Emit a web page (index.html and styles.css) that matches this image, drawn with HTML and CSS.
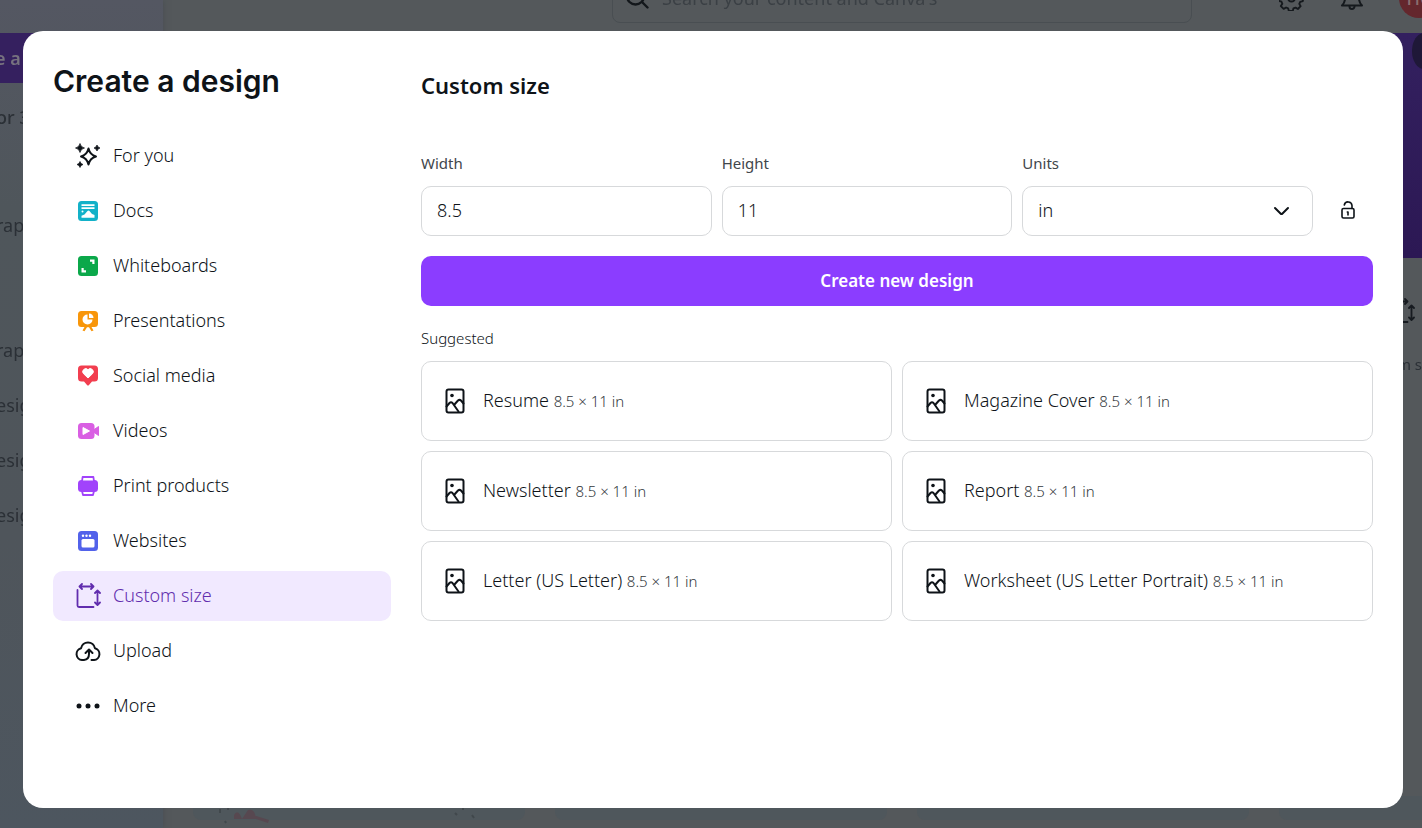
FILE: index.html
```html
<!DOCTYPE html>
<html lang="en">
<head>
<meta charset="utf-8">
<title>Create a design</title>
<link rel="stylesheet" href="styles.css">
</head>
<body>
<svg class="sprite" aria-hidden="true">
  <symbol id="page-image" viewBox="0 0 24 28"><g fill="none" stroke="currentColor" stroke-width="2" stroke-linejoin="round" stroke-linecap="round"><rect x="3.500" y="2.500" width="17" height="23" rx="2"/><path d="M3.500 19.500l3-3.500q1.500-1.500 3 0l6 8.500M11 18l4-4.500q1.500-1.300 3 0l2.500 3"/></g><circle cx="9" cy="8.500" r="1.800" fill="currentColor"/></symbol>
  <symbol id="resize" viewBox="0 0 26 26"><path d="M2.500 7v15.500q0 1.500 1.500 1.500H18.500M5 3.500h12.500M7 1L4.500 3.500 7 6M16 1l2.500 2.500L16 6M22.500 8v13M20 10l2.500-2.500L25 10M20 19.500l2.500 2.500 2.500-2.500" fill="none" stroke="currentColor" stroke-width="1.800" stroke-linecap="round" stroke-linejoin="round"/></symbol>
</svg>

<div class="page" aria-hidden="true">
  <div class="page-side">
    <div class="page-create">e a</div>
    <div class="page-team">or 3</div>
    <ul class="page-links">
      <li class="page-link page-link-spaced">rap</li>
      <li class="page-link">rap</li>
      <li class="page-link">esig</li>
      <li class="page-link">esig</li>
      <li class="page-link">esig</li>
    </ul>
  </div>
  <div class="page-main">
    <div class="page-top">
      <div class="page-search">
        <svg class="page-glass" viewBox="0 0 26 26"><path d="M17 17l5.500 5.500M19 11a8.500 8.500 0 1 1-17 0 8.500 8.500 0 0 1 17 0z" fill="none" stroke="currentColor" stroke-width="2.400" stroke-linecap="round"/></svg>
        <span>Search your content and Canva's</span>
      </div>
      <div class="page-tools">
        <svg class="page-tool" viewBox="0 0 26 26" fill="none" stroke="currentColor" stroke-width="2" stroke-linejoin="round"><path d="M10.800 2h4.400l.7 3 2.200 1 2.700-1.600 3 3-1.600 2.700.9 2.200 2.600.8v4.200l-2.900.8-1 2.200 1.500 2.500-3 3-2.500-1.500-2.300.9-.7 2.800h-4.200l-.8-2.900-2.200-.9-2.600 1.500-3-3 1.600-2.500-.9-2.200-2.700-.9v-4.100l2.900-.8.9-2.100L2.200 7.400l3-3L7.800 6 10 5z" transform="scale(.93)"/><circle cx="12.500" cy="13" r="3.500"/></svg>
        <svg class="page-tool" viewBox="0 0 26 26" fill="none" stroke="currentColor" stroke-width="2" stroke-linejoin="round" stroke-linecap="round"><path d="M3 20.500h20c-2-2-3-4-3-7V10a7 7 0 0 0-14 0v3.500c0 3-1 5-3 7z"/><path d="M10.500 21.500a2.500 2.500 0 0 0 5 0"/></svg>
        <div class="page-avatar">HC</div>
      </div>
    </div>
    <div class="page-hero"><svg class="page-orb" viewBox="0 0 10 36"><ellipse cx="12" cy="18" rx="12" ry="18" fill="#1f1838"/></svg></div>
    <div class="page-short">
      <svg class="page-resize"><use href="#resize"/></svg>
      <span>m s</span>
    </div>
    <div class="page-cards">
      <div class="page-card">
        <svg class="page-art" viewBox="0 0 300 24"><path d="M41 9q4-7 8 4l6-9q7-2 8 9H41zM60 9l16 5-1 3-12-4z" fill="#574850"/><path d="M27 3v4M35 1v3M262 7l2 2M279 9l2 3M270 2v2M32 15l1 2" stroke="#41484c" stroke-width="2"/></svg>
      </div>
      <div class="page-card"></div>
      <div class="page-card"></div>
      <div class="page-card"></div>
    </div>
  </div>
</div>

<div class="overlay">
  <div class="dialog" role="dialog" aria-modal="true" aria-labelledby="dialog-title">
    <div class="side">
      <h1 class="side-title" id="dialog-title">Create a design</h1>
      <nav class="nav">
        <button class="nav-item"><svg class="nav-icon" viewBox="0 0 26 26"><path d="M13.500 5.500Q15 12 21 13.500 15 15 13.500 21.500 12 15 6 13.500 12 12 13.500 5.500z" fill="none" stroke="currentColor" stroke-width="2" stroke-linejoin="round"/><path d="M5 .5Q5.800 4.200 9.500 5 5.800 5.800 5 9.500 4.200 5.800.5 5 4.200 4.200 5 .5zM22 2q.6 2.400 3 3-2.400.6-3 3-.6-2.400-3-3 2.400-.6 3-3zM5 18.500q.6 2.400 3 3-2.400.6-3 3-.6-2.400-3-3 2.400-.6 3-3z" fill="currentColor" stroke="currentColor" stroke-width=".7"/></svg><span class="nav-text">For you</span></button>
        <button class="nav-item"><svg class="nav-icon" viewBox="0 0 26 26"><rect x="3" y="3" width="20" height="20" rx="3.500" fill="#13b1c8"/><path d="M6.500 7.200h13M6.500 10.200h13" stroke="#fff" stroke-width="1.800"/><path d="M6.500 19.700v-2l3-1.200 3-3.500q1-1 2 0l2.500 3 2.500 1v2.700z" fill="#fff"/><circle cx="7.500" cy="13.500" r="1" fill="#fff"/></svg><span class="nav-text">Docs</span></button>
        <button class="nav-item"><svg class="nav-icon" viewBox="0 0 26 26"><rect x="3" y="3" width="20" height="20" rx="3.500" fill="#0ba84a"/><path d="M15 7.600h3.400V11M7.600 15v3.400H11" fill="none" stroke="#fff" stroke-width="2.200"/></svg><span class="nav-text">Whiteboards</span></button>
        <button class="nav-item"><svg class="nav-icon" viewBox="0 0 26 26"><path d="M6.500 3h13A3.500 3.500 0 0 1 23 6.500v9a3.500 3.500 0 0 1-3.500 3.500h-3l2 3.500-2 .8-2.500-4h-2l-2.500 4-2-.8 2-3.500h-3A3.500 3.500 0 0 1 3 15.500v-9A3.500 3.500 0 0 1 6.500 3z" fill="#f8960a"/><path d="M12.500 6.500v5h5a5 5 0 1 1-5-5z" fill="#fff"/><path d="M14 5.500a4.500 4.500 0 0 1 4.500 4.500H14z" fill="#fff"/></svg><span class="nav-text">Presentations</span></button>
        <button class="nav-item"><svg class="nav-icon" viewBox="0 0 26 26"><path d="M6.500 2.500h13A3.500 3.500 0 0 1 23 6v9a3.500 3.500 0 0 1-3.500 3.500H17L14 22q-1 1-2 0l-3-3.500H6.500A3.500 3.500 0 0 1 3 15V6a3.500 3.500 0 0 1 3.500-3.500z" fill="#f23e4f"/><path d="M13 15l-4.500-4.300a3 3 0 0 1 4.500-4 3 3 0 0 1 4.500 4z" fill="#fff" stroke="#fff"/></svg><span class="nav-text">Social media</span></button>
        <button class="nav-item"><svg class="nav-icon" viewBox="0 0 26 26"><rect x="3" y="5" width="16.500" height="16" rx="3.500" fill="#d95fe3"/><path d="M18.500 12l5-3.500v9l-5-3.500z" fill="#d95fe3" stroke="#d95fe3" stroke-linejoin="round"/><path d="M8 9.500v7l6.500-3.500z" fill="#fff" stroke="#fff" stroke-linejoin="round"/></svg><span class="nav-text">Videos</span></button>
        <button class="nav-item"><svg class="nav-icon" viewBox="0 0 26 26"><rect x="3" y="7" width="20" height="12" rx="3.500" fill="#a143fb"/><path d="M7 8.500l.6-4.500h10.800l.6 4.500zM7 18l1 4h10l1-4z" fill="#fff" stroke="#a143fb" stroke-width="1.800" stroke-linejoin="round"/></svg><span class="nav-text">Print products</span></button>
        <button class="nav-item"><svg class="nav-icon" viewBox="0 0 26 26"><rect x="3" y="3" width="20" height="20" rx="3.500" fill="#5262ea"/><rect x="6.500" y="11" width="13" height="8.500" rx="1.500" fill="#fff"/><circle cx="8" cy="7.800" r="1.200" fill="#fff"/><circle cx="11.500" cy="7.800" r="1.200" fill="#fff"/><circle cx="15" cy="7.800" r="1.200" fill="#fff"/></svg><span class="nav-text">Websites</span></button>
        <button class="nav-item nav-item-active" aria-current="page"><svg class="nav-icon"><use href="#resize"/></svg><span class="nav-text">Custom size</span></button>
        <button class="nav-item"><svg class="nav-icon" viewBox="0 0 26 26"><path d="M9 22c3.500-.3 5-3 5-6v-4M10.500 15L14 11.500l3.500 3.500M9 22H7a6 6 0 0 1-.9-11.800 7 7 0 0 1 13.800 0A6 6 0 0 1 19 22h-2.500" fill="none" stroke="currentColor" stroke-width="2" stroke-linecap="round" stroke-linejoin="round"/></svg><span class="nav-text">Upload</span></button>
        <button class="nav-item"><svg class="nav-icon" viewBox="0 0 26 26" fill="currentColor"><circle cx="4" cy="13" r="2.500"/><circle cx="13" cy="13" r="2.500"/><circle cx="22" cy="13" r="2.500"/></svg><span class="nav-text">More</span></button>
      </nav>
    </div>

    <main class="main">
      <h2 class="main-title">Custom size</h2>
      <form class="form">
        <div class="fields">
          <div class="field">
            <label class="label" for="width">Width</label>
            <input class="control" id="width" type="text" inputmode="decimal" value="8.5">
          </div>
          <div class="field">
            <label class="label" for="height">Height</label>
            <input class="control" id="height" type="text" inputmode="decimal" value="11">
          </div>
          <div class="field">
            <label class="label" for="units">Units</label>
            <div class="select">
              <select class="control" id="units"><option>in</option><option>px</option><option>cm</option><option>mm</option></select>
              <svg class="chevron" viewBox="0 0 20 20"><path d="M3 7l5.500 5.500q1 1 2 0L16 7" fill="none" stroke="currentColor" stroke-width="2" stroke-linecap="round"/></svg>
            </div>
          </div>
          <button class="lock" type="button" aria-label="Lock aspect ratio"><svg class="lock-icon" viewBox="0 0 20 20" fill="none" stroke="currentColor" stroke-width="1.600" stroke-linecap="round"><rect x="4" y="7.500" width="12" height="9.500" rx="1.500"/><path d="M6.300 4A3.900 3.900 0 0 1 14 4.500v3M10 11v3M9.300 11h.7"/></svg></button>
        </div>
        <button class="create" type="button">Create new design</button>
      </form>
      <h3 class="subhead">Suggested</h3>
      <div class="cards">
        <button class="card"><svg class="card-icon"><use href="#page-image"/></svg><span class="card-text">Resume <small class="size">8.5 × 11 in</small></span></button>
        <button class="card"><svg class="card-icon"><use href="#page-image"/></svg><span class="card-text">Magazine Cover <small class="size">8.5 × 11 in</small></span></button>
        <button class="card"><svg class="card-icon"><use href="#page-image"/></svg><span class="card-text">Newsletter <small class="size">8.5 × 11 in</small></span></button>
        <button class="card"><svg class="card-icon"><use href="#page-image"/></svg><span class="card-text">Report <small class="size">8.5 × 11 in</small></span></button>
        <button class="card"><svg class="card-icon"><use href="#page-image"/></svg><span class="card-text">Letter (US Letter) <small class="size">8.5 × 11 in</small></span></button>
        <button class="card"><svg class="card-icon"><use href="#page-image"/></svg><span class="card-text">Worksheet (US Letter Portrait) <small class="size">8.5 × 11 in</small></span></button>
      </div>
    </main>
  </div>
</div>
</body>
</html>
```
FILE: styles.css
```css
* { box-sizing: border-box; }

body {
  margin: 0;
  font-family: "Noto Sans", "Open Sans", sans-serif;
  font-size: 18px;
  font-weight: 350;
  color: #0e1318;
  background: #54585b;
}

button, input, select { font: inherit; color: inherit; }
button { cursor: pointer; }
.sprite { display: none; }

/* Dimmed page under the dialog */
.page {
  position: fixed;
  inset: 0;
  display: flex;
  overflow: hidden;
  white-space: nowrap;
  color: #2b3036;
}
.page-side {
  width: 163px;
  padding-top: 33px;
  background: linear-gradient(#545762, #4f565b 25%, #4f555b 65%, #4d565f);
  box-shadow: 0 0 6px #484d52;
}
.page-create {
  height: 50px;
  line-height: 50px;
  text-indent: -5px;
  font-weight: 600;
  color: #77727f;
  background: #35205f;
}
.page-team { margin-top: 20px; line-height: 28px; text-indent: -4px; font-weight: 500; }
.page-links { margin: 67px 0 0; padding: 0; list-style: none; text-indent: -4px; }
.page-link { height: 55px; line-height: 55px; margin: 0; font-weight: 400; }
.page-link-spaced { height: 125px; line-height: 55px; }
.page-main {
  flex: 1;
  display: flex;
  flex-direction: column;
  min-width: 0;
}
.page-top {
  height: 33px;
  display: flex;
  justify-content: flex-end;
  align-items: flex-end;
}
.page-search {
  width: 580px;
  height: 50px;
  margin: 0 87px 10px 0;
  padding-left: 12px;
  display: flex;
  align-items: center;
  gap: 11px;
  border: 1px solid #494e52;
  border-radius: 8px;
  flex-shrink: 0;
}
.page-search span { font-weight: 400; color: #3b4045; }
.page-glass { width: 26px; height: 26px; color: #13171b; }
.page-tools { display: flex; align-items: center; gap: 34px; margin-bottom: 15px; width: 143px; flex-shrink: 0; }
.page-tool { width: 26px; height: 26px; flex-shrink: 0; color: #15191d; }
.page-avatar {
  width: 40px;
  height: 40px;
  line-height: 40px;
  flex-shrink: 0;
  border-radius: 50%;
  text-align: center;
  font-weight: 500;
  color: #8a6f70;
  background: #64272d;
}
.page-hero {
  height: 225px;
  display: flex;
  justify-content: flex-end;
  background: linear-gradient(#33205f, #2c1854);
  flex-shrink: 0;
}
.page-orb { width: 10px; height: 36px; }
.page-short {
  display: flex;
  flex-direction: column;
  align-items: flex-end;
  gap: 30px;
  padding: 40px 0 0;
  font-size: 15px;
  font-weight: 400;
}
.page-resize { width: 26px; height: 26px; margin-right: 7px; color: #171b20; }
.page-cards {
  margin-top: auto;
  padding: 0 0 8px 30px;
  display: flex;
  gap: 30px;
}
.page-card { width: 332px; height: 24px; flex-shrink: 0; border-radius: 0 0 8px 8px; background: #4f575c; }
.page-art { display: block; width: 300px; height: 24px; margin-top: 10px; }

/* Dialog */
.overlay {
  position: relative;
  min-height: 100vh;
  display: flex;
  padding: 31px 19px 20px 23px;
}
.dialog {
  flex: 1;
  min-width: 0;
  display: flex;
  gap: 30px;
  padding: 30px;
  border-radius: 20px;
  background: #fff;
}
.side { width: 338px; flex-shrink: 0; }
.side-title {
  margin: 0 0 30px;
  font-family: Inter, sans-serif;
  font-size: 30px;
  line-height: 40px;
  font-weight: 600;
}
.nav { display: flex; flex-direction: column; gap: 5px; }
.nav-item {
  height: 50px;
  display: flex;
  align-items: center;
  gap: 12px;
  padding: 0 22px;
  border: 0;
  border-radius: 10px;
  background: none;
  text-align: left;
}
.nav-item-active { background: #f1e9ff; color: #612dae; }
.nav-icon { width: 26px; height: 26px; flex-shrink: 0; }
.nav-text, .card-text { padding-bottom: 2px; }

.main { flex: 1; min-width: 0; }
.main-title { margin: 9px 0 51px; font-size: 22px; line-height: 30px; font-weight: 600; }
.form { display: flex; flex-direction: column; gap: 20px; }
.fields { display: flex; align-items: flex-end; gap: 10px; }
.field { flex: 1; min-width: 0; }
.label {
  display: block;
  margin-bottom: 11px;
  font-size: 15px;
  line-height: 24px;
  font-weight: 400;
  color: #41464b;
}
.control {
  display: block;
  width: 100%;
  height: 50px;
  padding: 0 15px 2px;
  border: 1px solid #d7d9db;
  border-radius: 10px;
  background: #fff;
  appearance: none;
}
.select { position: relative; }
.chevron {
  position: absolute;
  top: 15px;
  right: 21px;
  width: 20px;
  height: 20px;
  pointer-events: none;
}
.lock {
  width: 50px;
  height: 50px;
  display: grid;
  place-items: center;
  padding: 0;
  border: 0;
  background: none;
}
.lock-icon { width: 20px; height: 20px; }
.create {
  height: 50px;
  padding: 0 15px 2px;
  border: 0;
  border-radius: 10px;
  font-size: 17px;
  font-weight: 600;
  color: #fff;
  background: #8b3dff;
}
.subhead { margin: 20px 0 11px; font-size: 15px; line-height: 24px; font-weight: 350; }
.cards { display: grid; grid-template-columns: 1fr 1fr; gap: 10px; }
.card {
  height: 80px;
  display: flex;
  align-items: center;
  gap: 16px;
  padding: 0 21px;
  border: 1px solid #d7d9db;
  border-radius: 10px;
  background: #fff;
  text-align: left;
}
.card-icon { width: 24px; height: 28px; flex-shrink: 0; }
.size { font-size: 15px; font-weight: 300; color: #33383d; }
```
